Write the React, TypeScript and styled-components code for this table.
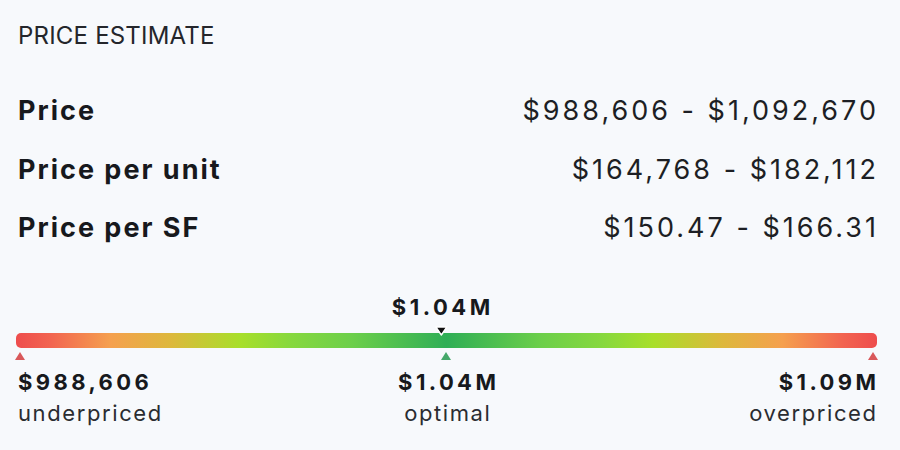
import React from "react";
import styled, { createGlobalStyle } from "styled-components";

const GlobalStyle = createGlobalStyle`
  html, body { margin: 0; padding: 0; background: #f7f9fc; }
  body { font-family: "Inter", "Liberation Sans", sans-serif; color: #1b1d21; }
`;

const Card = styled.div`
  width: 900px;
  height: 450px;
  box-sizing: border-box;
  padding: 20px 24px 0 18px;
  display: flex;
  flex-direction: column;
  overflow: hidden;
`;

const Title = styled.div`
  font-size: 24px;
  line-height: 32px;
  font-weight: 400;
  letter-spacing: 0.2px;
  color: #24262b;
`;

const Rows = styled.div`
  display: flex;
  flex-direction: column;
  margin-top: 42px;
`;

const Row = styled.div`
  display: flex;
  justify-content: space-between;
  align-items: baseline;
  height: 58.5px;
  line-height: 34px;
`;

const Label = styled.span`
  font-size: 27px;
  font-weight: 700;
  letter-spacing: 2px;
  color: #17191d;
`;

const Value = styled.span`
  font-size: 27px;
  font-weight: 400;
  letter-spacing: 3px;
  margin-right: -3px;
  color: #1d1f24;
`;

const Scale = styled.div`
  margin-top: 25.5px;
  display: flex;
  flex-direction: column;
`;

const Track = styled.div`
  position: relative;
  margin: 0 -1px 0 -2px;
  padding-top: 38px;
`;

const Marker = styled.div`
  position: absolute;
  top: 0;
  transform: translateX(-50%);
  display: flex;
  flex-direction: column;
  align-items: center;
  z-index: 1;
`;

const MarkerValue = styled.span`
  font-size: 22px;
  font-weight: 700;
  line-height: 24px;
  letter-spacing: 3.5px;
  margin-right: -3.5px;
  color: #17191d;
`;

const Pointer = styled.svg`
  margin-top: 7px;
  display: block;
`;

const Bar = styled.div`
  height: 15px;
  border-radius: 5px;
  background: linear-gradient(
    90deg,
    #ee4d4d 0%,
    #f26450 4%,
    #f5a04e 11%,
    #ddb83c 18%,
    #a8df2a 26%,
    #86d83e 32%,
    #6ccf4a 39%,
    #2fae56 50%,
    #6ccf4a 61%,
    #86d83e 68%,
    #a8df2a 74%,
    #ddb83c 82%,
    #f5a04e 89%,
    #f26450 96%,
    #ee4d4d 100%
  );
`;

const Ticks = styled.div`
  position: relative;
  height: 12px;
`;

const Tick = styled.svg`
  position: absolute;
  top: 4px;
  transform: translateX(-50%);
  display: block;
`;

const Legend = styled.div`
  display: grid;
  grid-template-columns: 1fr auto 1fr;
  margin-top: 7px;
`;

const LegendItem = styled.div<{ $align: "left" | "center" | "right" }>`
  display: flex;
  flex-direction: column;
  align-items: ${(p) =>
    p.$align === "left" ? "flex-start" : p.$align === "right" ? "flex-end" : "center"};
`;

const LegendValue = styled.span`
  font-size: 22px;
  font-weight: 700;
  line-height: 30px;
  letter-spacing: 3.4px;
  margin-right: -3.4px;
  color: #17191d;
`;

const LegendCaption = styled.span`
  font-size: 22px;
  font-weight: 400;
  line-height: 32px;
  letter-spacing: 1.6px;
  margin-right: -1.6px;
  color: #2a2c31;
`;

const TRACK_WIDTH = 861;

const ticks = [
  { x: 4, color: "#d9585a" },
  { x: 430, color: "#45a86a" },
  { x: 857, color: "#d9585a" },
];

export default function App() {
  const rows = [
    { label: "Price", value: "$988,606 - $1,092,670" },
    { label: "Price per unit", value: "$164,768 - $182,112" },
    { label: "Price per SF", value: "$150.47 - $166.31" },
  ];
  const markerPct = (425 / TRACK_WIDTH) * 100;
  return (
    <>
      <GlobalStyle />
      <Card>
        <Title>PRICE ESTIMATE</Title>
        <Rows>
          {rows.map((r) => (
            <Row key={r.label}>
              <Label>{r.label}</Label>
              <Value>{r.value}</Value>
            </Row>
          ))}
        </Rows>
        <Scale>
          <Track>
            <Marker style={{ left: `${markerPct}%` }}>
              <MarkerValue>$1.04M</MarkerValue>
              <Pointer width="13" height="10" viewBox="0 0 13 10">
                <path
                  d="M1 1 L12 1 L6.5 9 Z"
                  fill="#111"
                  stroke="#fff"
                  strokeWidth="1.4"
                  strokeLinejoin="round"
                />
              </Pointer>
            </Marker>
            <Bar />
            <Ticks>
              {ticks.map((t) => (
                <Tick
                  key={t.x}
                  style={{ left: `${t.x}px` }}
                  width="10"
                  height="8"
                  viewBox="0 0 10 8"
                >
                  <path d="M5 0 L10 8 L0 8 Z" fill={t.color} />
                </Tick>
              ))}
            </Ticks>
          </Track>
          <Legend>
            <LegendItem $align="left">
              <LegendValue>$988,606</LegendValue>
              <LegendCaption>underpriced</LegendCaption>
            </LegendItem>
            <LegendItem $align="center">
              <LegendValue>$1.04M</LegendValue>
              <LegendCaption>optimal</LegendCaption>
            </LegendItem>
            <LegendItem $align="right">
              <LegendValue>$1.09M</LegendValue>
              <LegendCaption>overpriced</LegendCaption>
            </LegendItem>
          </Legend>
        </Scale>
      </Card>
    </>
  );
}
